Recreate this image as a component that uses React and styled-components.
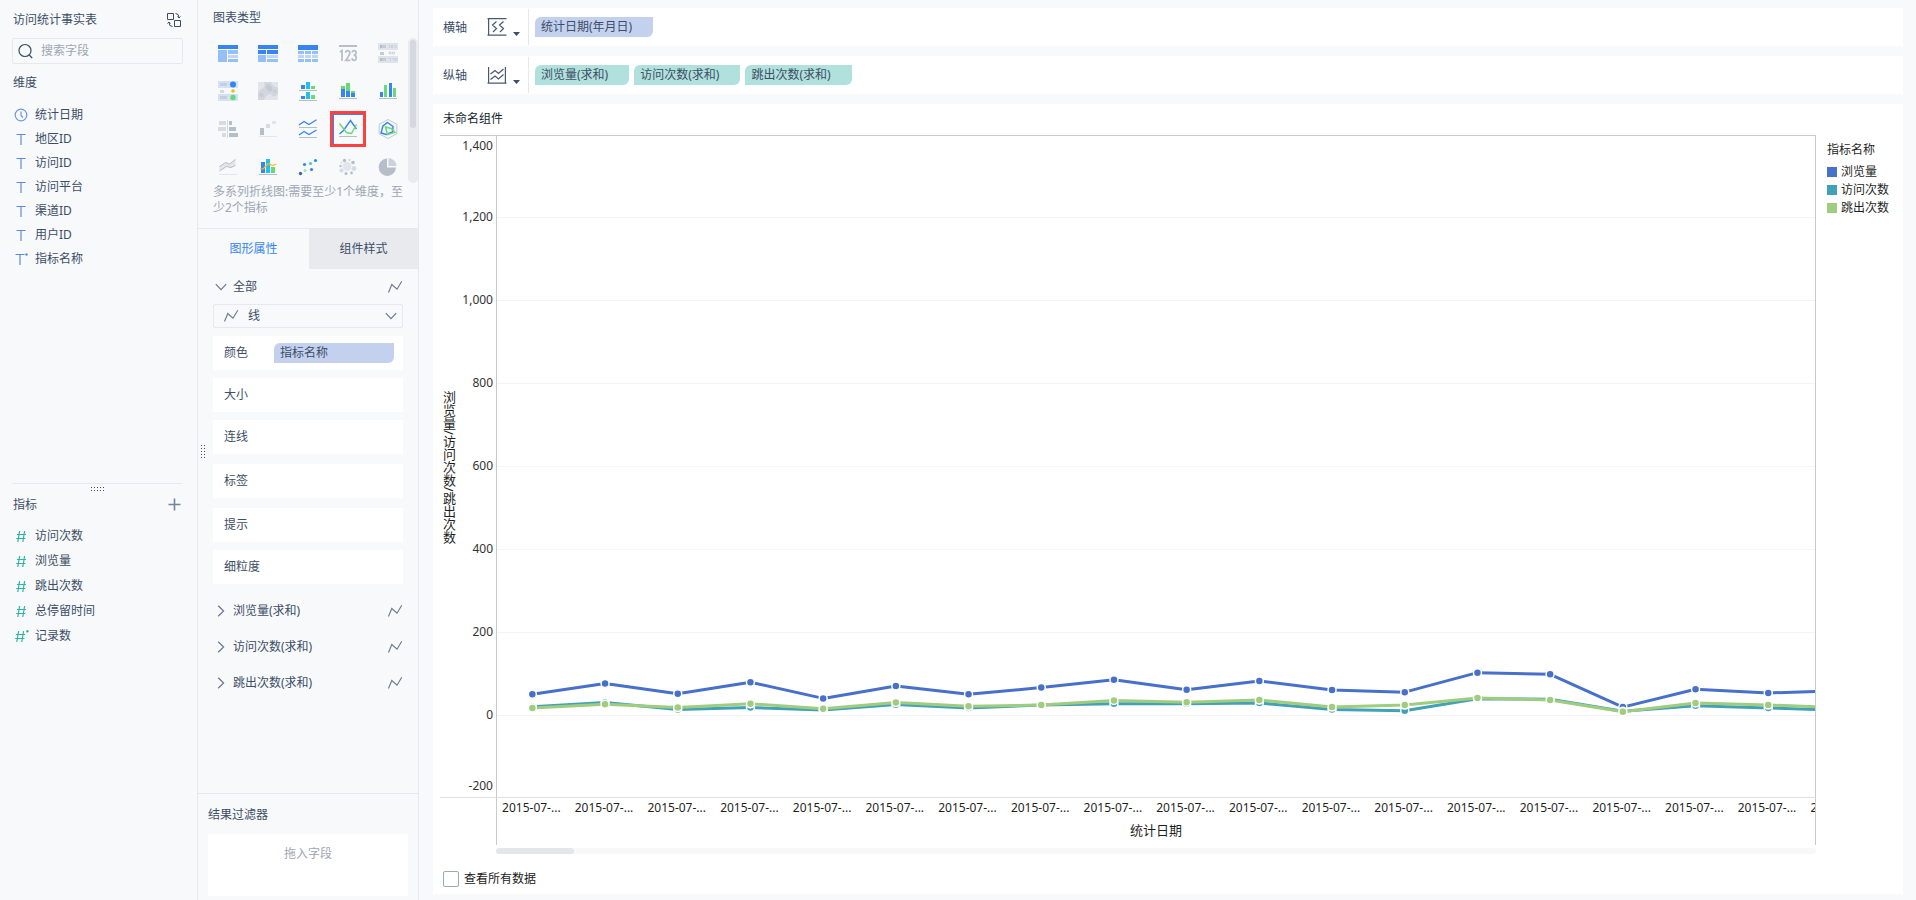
import React, { useState } from 'react'
import styled, { createGlobalStyle } from 'styled-components'

const GlobalStyle = createGlobalStyle`
    * {
        box-sizing: border-box;
    }

    body {
        margin: 0;
        background: #f7f9fb;
        color: #3d4d66;
        font-family: "Noto Sans", "Noto Sans CJK SC", sans-serif;
        font-size: 12px;
        line-height: 16px;
    }

    button, input, select {
        font: inherit;
        color: inherit;
    }

    button {
        padding: 0;
        border: none;
        background: none;
        cursor: pointer;
    }

    ul {
        margin: 0;
        padding: 0;
        list-style: none;
    }

    svg {
        display: block;
        flex: none;
    }
`;

const Page = styled.div`
    display: flex;
    min-height: 100vh;
`;

/* ---------- field list ---------- */

const FieldPanel = styled.aside`
    display: flex;
    flex-direction: column;
    flex: none;
    width: 198px;
    border-right: 1px solid #e6e8ec;
`;

const Dimensions = styled.section`
    flex: 1;
    padding: 0 14px 0 12px;
`;

const Measures = styled.section`
    flex: none;
    height: 417px;
    margin: 0 15px 0 12px;
    border-top: 1px solid #e6e8ec;
`;

const Heading = styled.h2`
    display: flex;
    align-items: center;
    justify-content: space-between;
    height: ${(p) => p.$height || 36}px;
    margin: 0;
    padding: 1px 1px 0;
    font-size: 12px;
    font-weight: 400;
`;

const Search = styled.label`
    display: flex;
    align-items: center;
    gap: 7px;
    height: 26px;
    padding-left: 5px;
    border: 1px solid #e6e8ec;
    border-radius: 2px;

    input {
        flex: 1;
        min-width: 0;
        padding: 0;
        border: none;
        outline: none;
        background: none;
    }

    input::placeholder {
        color: #9ea6b4;
        opacity: 1;
    }
`;

const FieldList = styled.ul`
    padding-top: ${(p) => p.$top}px;

    li {
        display: flex;
        align-items: center;
        gap: 6px;
        height: ${(p) => p.$row}px;
        padding-left: 1px;
    }
`;

const GripRow = styled.div`
    display: flex;
    justify-content: center;
    align-items: center;
    height: 11px;
    padding: 1px 0 0 2px;
`;

/* ---------- settings ---------- */

const SettingsPanel = styled.section`
    position: relative;
    display: flex;
    flex-direction: column;
    flex: none;
    width: 221px;
    border-right: 1px solid #e6e8ec;
`;

const SideGrip = styled.div`
    position: absolute;
    left: 3px;
    top: 50%;
    transform: translateY(-5px);
`;

const PanelTitle = styled.h2`
    margin: 0;
    padding: 10px 15px 8px;
    font-size: 12px;
    font-weight: 400;
`;

const TypeArea = styled.div`
    display: flex;
    justify-content: space-between;
    height: 149px;
    padding-left: 10px;
`;

const TypeGrid = styled.div`
    display: grid;
    grid-template-columns: repeat(5, 40px);
    grid-auto-rows: 38px;
    place-items: center;
    overflow: hidden;
`;

const TypeButton = styled.button`
    display: flex;
    align-items: center;
    justify-content: center;
    width: 36px;
    height: 36px;
    border: 3px solid ${(p) => (p.$active ? '#ff4040' : 'transparent')};
    box-shadow: ${(p) => (p.$active ? 'inset 1px 1px 0 #3685f2' : 'none')};
`;

const ScrollTrack = styled.div`
    width: 10px;
    margin-top: 4px;
    padding: 2px;
    border-radius: 5px;
    background: #e9ebee;

    div {
        height: 88px;
        border-radius: 3px;
        background: #d5d8de;
    }
`;

const Hint = styled.p`
    margin: 0;
    padding: 1px 14px 12px 15px;
    color: #9ea6b4;
`;

const Tabs = styled.div`
    display: grid;
    grid-template-columns: 111px 1fr;
    border-top: 1px solid #e6e8ec;
`;

const Tab = styled.button`
    height: 40px;
    background: ${(p) => (p.$active ? 'transparent' : '#e8eaed')};
    color: ${(p) => (p.$active ? '#3685f2' : '#3d4d66')};
`;

const Properties = styled.div`
    flex: 1;
    padding: 0 15px;
`;

const Fold = styled.button`
    display: flex;
    align-items: center;
    width: 100%;
    height: ${(p) => p.$height}px;
    padding: 0 0 0 2px;
    gap: 6px;
    text-align: left;

    span {
        flex: 1;
    }
`;

const Picker = styled.label`
    display: flex;
    align-items: center;
    height: 24px;
    padding: 0 5px 0 9px;
    border: 1px solid #e6e8ec;
    border-radius: 2px;

    select {
        flex: 1;
        height: 22px;
        margin-left: 9px;
        padding: 0;
        border: none;
        outline: none;
        background: none;
        appearance: none;
    }
`;

const Slot = styled.div`
    display: flex;
    align-items: center;
    height: 34px;
    margin-top: ${(p) => p.$gap}px;
    padding: 0 9px 0 11px;
    background: #fff;

    > span {
        width: 50px;
    }
`;

const Folds = styled.div`
    padding-top: 9px;
`;

const Filters = styled.div`
    flex: none;
    height: 107px;
    padding: 0 10px 4px 9px;
    border-top: 1px solid #e6e8ec;
`;

const DropZone = styled.div`
    height: 62px;
    margin-left: 1px;
    padding-top: 12px;
    background: #fff;
    color: #9ea6b4;
    text-align: center;
`;

const Chip = styled.button`
    flex: ${(p) => (p.$fill ? 1 : 'none')};
    height: 20px;
    padding: 0 21px 0 6px;
    border-radius: 6px 0 6px 0;
    background: ${(p) => (p.$measure ? '#b0e1dc' : '#c3d1ef')};
    text-align: left;
`;

/* ---------- canvas ---------- */

const Main = styled.main`
    display: flex;
    flex-direction: column;
    flex: 1;
    min-width: 0;
    gap: 10px;
    padding: 8px 13px 6px 14px;
`;

const Shelf = styled.div`
    display: flex;
    align-items: center;
    height: 38px;
    padding-left: 10px;
    background: #fff;

    > span {
        padding-top: 1px;
    }
`;

const ShelfType = styled.button`
    display: flex;
    align-items: flex-end;
    gap: 6px;
    width: 42px;
    height: 36px;
    margin-left: 20px;
    padding-bottom: 9px;
    border-right: 1px solid #e6e8ec;
`;

const Chips = styled.div`
    display: flex;
    gap: 5px;
    padding-left: 6px;
`;

const ChartCard = styled.section`
    flex: 1;
    padding-left: 7px;
    background: #fff;
    color: #1f1f1f;
`;

const ChartTitle = styled.h1`
    height: 31px;
    margin: 0;
    padding: 7px 3px;
    font-size: 12px;
    font-weight: 400;
    color: #141e2e;
`;

const ChartGrid = styled.div`
    display: grid;
    grid-template-columns: 56px minmax(0, 1fr) 87px;
`;

const YAxis = styled.div`
    display: flex;
    align-items: center;
    border-top: 1px solid #c9cacc;
    border-bottom: 1px solid #dfe0e2;
`;

const YTitle = styled.div`
    width: 17px;
    padding-top: 1px;
    font-size: 13px;
    line-height: 16px;
    writing-mode: vertical-rl;
`;

const Plot = styled.div`
    overflow: hidden;
    border: 1px solid #c9cacc;
    border-bottom-color: #dfe0e2;
`;

const XAxis = styled.div`
    grid-column: 2;
    height: 47px;
    overflow: hidden;
    border: solid #c9cacc;
    border-width: 0 1px;
`;

const XLabels = styled.div`
    display: flex;
    margin-left: -2px;

    span {
        flex: none;
        width: ${(p) => p.$band}px;
        padding-top: 2px;
        text-align: center;
    }
`;

const XTitle = styled.div`
    padding-top: 6px;
    font-size: 13px;
    text-align: center;
`;

const HScroll = styled.div`
    grid-column: 2;
    height: 6px;
    margin-top: 3px;
    border-radius: 3px;
    background: #f8f8f9;

    div {
        width: 78px;
        height: 6px;
        border-radius: 3px;
        background: #e5e6ea;
    }
`;

const Legend = styled.div`
    padding: 7px 0 0 11px;

    ul {
        padding-top: 5px;
    }

    li {
        display: flex;
        align-items: center;
        gap: 4px;
        height: 18px;
    }
`;

const Swatch = styled.i`
    width: 10px;
    height: 10px;
    background: ${(p) => p.$color};
`;

const ShowAll = styled.label`
    display: inline-flex;
    align-items: center;
    gap: 5px;
    padding: 17px 0 7px 3px;
    color: #1a1a1a;

    input {
        width: 16px;
        height: 16px;
        margin: 0;
        border: 1px solid #9ea8b6;
        border-radius: 2px;
        background: #fff;
        appearance: none;
    }

    input:checked {
        background: #3685f2;
    }
`;

/* ---------- icons ---------- */

const FieldIcon = ({ type }) => {
    if (type === 'date') {
        return (
            <svg width="16" height="16" viewBox="0 0 16 16" fill="none" stroke="#6f97e3" strokeWidth="1.2">
                <circle cx="8" cy="8" r="5.8" />
                <path d="M8 4.5V8.5L10 10.5" />
            </svg>
        )
    }
    if (type === 'text' || type === 'name') {
        return (
            <svg width="16" height="16" viewBox="0 0 16 16" fill="none">
                <g transform={type === 'name' ? 'translate(-1 0)' : undefined}>
                    <path d="M3.5 3.5H12.5" stroke="#5b87dd" />
                    <path d="M8 4V14" stroke="#8fb0ea" strokeWidth="1.8" />
                </g>
                {type === 'name' && <circle cx="13.5" cy="3.5" r="1.2" fill="#5b87dd" />}
            </svg>
        )
    }
    return (
        <svg width="16" height="16" viewBox="0 0 16 16" fill="none" stroke="#2fb5a2" strokeWidth="1.2">
            <path
                d="M6.6 3L4.8 14M11.6 3L9.8 14M4 6.5H13M3.2 10.5H12.4"
                transform={type === 'count' ? 'translate(-1 0)' : undefined}
            />
            {type === 'count' && <circle cx="14.4" cy="3.2" r="1.2" fill="#2fb5a2" stroke="none" />}
        </svg>
    )
}

const SwapIcon = () => (
    <svg width="16" height="16" viewBox="0 0 16 16" fill="none" stroke="#3d4d66">
        <path d="M1.5 1.5H7.5V7.5H1.5ZM8.5 8.5H14.5V14.5H8.5Z" />
        <path d="M9.5 1.5Q13 1.5 13 5.5M11.5 4.5L13 6L14.5 4.5" />
        <path d="M6.5 14.5Q3 14.5 3 10.5M1.5 11.5L3 10L4.5 11.5" />
    </svg>
)

const SearchIcon = () => (
    <svg width="16" height="16" viewBox="0 0 16 16" fill="none" stroke="#3d4d66" strokeWidth="1.2">
        <circle cx="7" cy="7.5" r="6" />
        <path d="M11.2 12L14.2 15" />
    </svg>
)

const PlusIcon = () => (
    <svg width="13" height="13" viewBox="0 0 13 13" stroke="#76839a" strokeWidth="1.6">
        <path d="M6.5 0.5V12.5M0.5 6.5H12.5" />
    </svg>
)

const Zigzag = () => (
    <svg width="16" height="14" viewBox="0 0 16 14" fill="none" stroke="#6b778c" strokeWidth="1.1">
        <path d="M1.5 12.5L4.8 4.5L10 9.2L14.8 1.2" />
    </svg>
)

const Chevron = ({ open }) => (
    <svg width="12" height="12" viewBox="0 0 12 12" fill="none" stroke="#6b778c" strokeWidth="1.2">
        <path d={open ? 'M0.8 3.2L6 8.6L11.2 3.2' : 'M3.2 0.8L8.6 6L3.2 11.2'} />
    </svg>
)

const Grip = ({ cols, rows }) => {
    const dots = []
    for (let r = 0; r < rows; r++) {
        for (let c = 0; c < cols; c++) {
            dots.push(<rect key={`${r}-${c}`} x={c * 3} y={r * 3} width="1" height="1" />)
        }
    }
    return (
        <svg width={cols * 3} height={rows * 3} fill="#3d4d66">
            {dots}
        </svg>
    )
}

const XShelfIcon = () => (
    <svg width="20" height="18" viewBox="0 0 20 18" fill="none" stroke="#4a5870" strokeWidth="1.2">
        <path d="M0.5 0.6H19.5M1.6 0.5V17.5M0.5 17.2H19.5" />
        <path d="M9.5 3.5L5.5 7L9.5 10.5L6 14M16.5 3.5L12.5 7L16.5 10.5L13 14" />
    </svg>
)

const YShelfIcon = () => (
    <svg width="20" height="18" viewBox="0 0 20 18" fill="none" stroke="#4a5870" strokeWidth="1.2">
        <path d="M1.6 1V17.5M18.4 1V17.5M0.5 17.2H19.5" />
        <path d="M3.5 8L8 4.5L11.5 7.5L16.5 3M3.5 13.5L8 10L11.5 13L16.5 8.5" />
    </svg>
)

const Caret = () => (
    <svg width="7" height="4" viewBox="0 0 7 4" fill="#3d4d66">
        <path d="M0 0H7L3.5 4Z" />
    </svg>
)

const B = '#3685f2'
const L = '#94bff7'
const P = '#bed5f9'
const G = '#b5bec9'
const F = '#d5dbe3'
const C = '#25c0ea'
const N = '#67d975'

const Bars = ({ items }) =>
    items.map(([x, y, w, h, fill], i) => <rect key={i} x={x} y={y} width={w} height={h} fill={fill} />)

// every chart type drawn on a 20x20 board
const typeIcons = [
    ['分组表', <Bars items={[[0, 2, 20, 4, B], [0, 7, 9, 12, L], [10, 7, 10, 4, L], [10, 12, 10, 3, P], [10, 16, 10, 3, L]]} />],
    ['交叉表', <Bars items={[[0, 2, 20, 4, B], [0, 7, 8, 4, B], [9, 7, 11, 4, B], [0, 12, 8, 7, L], [9, 12, 11, 3, P], [9, 16, 11, 3, L]]} />],
    ['明细表', <Bars items={[[0, 2, 20, 5, B], [0, 8, 6, 3, L], [7, 8, 6, 3, L], [14, 8, 6, 3, L], [0, 12, 6, 3, P], [7, 12, 6, 3, P], [14, 12, 6, 3, P], [0, 16, 6, 3, L], [7, 16, 6, 3, L], [14, 16, 6, 3, L]]} />],
    ['指标卡', <>
        <rect x="1" y="2" width="18" height="2" fill={G} />
        <g fill="none" stroke={G} strokeWidth="1.7" shapeRendering="auto">
            <path d="M2 9.2L4 7.6V18" />
            <path d="M7.7 9.8Q7.7 7.6 9.7 7.6T11.8 9.8Q11.8 12 7.8 17.3H12.4" />
            <path d="M14.2 9.5Q14.4 7.6 16.2 7.6T18 9.8Q18 12.2 15.6 12.2Q18.2 12.2 18.2 14.8T16.2 17.3Q14.2 17.3 14 15.2" />
        </g>
    </>],
    ['文本卡', <>
        <Bars items={[[0, 0, 20, 7, '#dfe4ec'], [0, 13, 20, 7, '#dfe4ec'], [2, 2, 2, 3, G], [4, 2, 4, 3, '#c5ccd6'], [2, 9, 4, 3, '#c5ccd6'], [2, 15, 2, 3, G], [4, 15, 4, 3, '#c5ccd6']]} />
        <path d="M11.5 2V5M13 2.5H15V3.5H13V4.5H15M16.5 2.5H18V4.5H16.5M11 9H13V11.5M11 9V10.5H13M14.5 9H16.5V11H14.5ZM10.5 15.5H12.5V18M14 15.5H16V18M17.5 15.5H19V17.5H17.5Z" fill="none" stroke="#c5ccd6" strokeWidth="0.8" shapeRendering="auto" />
    </>],
    ['颜色表', <>
        <Bars items={[[0, 0, 20, 7, '#d3e1fa'], [0, 13, 20, 7, '#d3e1fa'], [2, 2, 7, 3, '#c8cdd6'], [2, 9, 4, 3, '#d5d8de'], [2, 15, 7, 3, '#c8cdd6']]} />
        <g shapeRendering="auto">
            <circle cx="15" cy="3.5" r="3" fill={B} />
            <circle cx="15" cy="10" r="1.8" fill="#fcb913" />
            <circle cx="15" cy="16.5" r="2.7" fill={N} />
        </g>
    </>],
    ['热力图', <g shapeRendering="auto">
        <rect y="1" width="20" height="18" fill="#d2d6de" />
        <path d="M0 1H6Q8 6 4 8Q1 9 0 12ZM13 1H20V6Q15 7 13 1ZM6 19Q8 13 13 13Q15 18 20 13V19Z" fill="#e1e4ea" />
        <ellipse cx="11" cy="7" rx="2.6" ry="4" fill="#c5cad3" transform="rotate(-40 11 7)" />
        <circle cx="3.5" cy="14" r="2" fill="#c5cad3" />
        <circle cx="17" cy="10" r="1.6" fill="#c5cad3" />
    </g>],
    ['分区柱形图', <Bars items={[[3, 4, 4, 4, B], [8, 1, 4, 7, C], [13, 5, 4, 3, N], [1, 9, 18, 1, G], [3, 15, 4, 3, B], [8, 11, 4, 7, C], [13, 14, 4, 4, N], [1, 19, 18, 1, G]]} />],
    ['堆积柱形图', <Bars items={[[3, 5, 4, 3, N], [3, 8, 4, 8, B], [8, 2, 4, 8, N], [8, 10, 4, 6, B], [13, 10, 4, 2, N], [13, 12, 4, 4, B], [1, 17, 18, 1, G]]} />],
    ['多系列柱形图', <Bars items={[[2, 11, 3, 5, B], [6, 4, 3, 12, N], [11, 2, 3, 14, B], [15, 7, 3, 9, N], [1, 17, 18, 1, G]]} />],
    ['对比柱状图', <Bars items={[[1, 2, 7, 4, F], [0, 8, 8, 4, F], [4, 14, 4, 4, F], [9, 1, 1, 18, F], [11, 2, 3, 4, G], [11, 8, 7, 4, G], [11, 14, 9, 4, G]]} />],
    ['瀑布图', <Bars items={[[2, 9, 4, 7, G], [8, 5, 4, 4, F], [14, 2, 4, 3, '#e1e5ed'], [1, 17, 18, 1, '#e1e5ed']]} />],
    ['分区折线图', <>
        <Bars items={[[1, 8, 18, 1, G], [1, 18, 18, 1, G]]} />
        <path d="M1 6L6 2.5L11 5.5L18.5 0.8M1 16L6 12.5L11 15.5L18.5 11" fill="none" stroke={B} strokeWidth="1.3" shapeRendering="auto" />
    </>],
    ['多系列折线图', <>
        <rect x="1" y="17" width="18" height="1" fill={G} />
        <g fill="none" strokeWidth="1.4" shapeRendering="auto">
            <path d="M1.5 15L5.5 11.5L12.5 1.5L18.5 10" stroke={B} />
            <path d="M1.5 4.5L8.5 13.5L13.5 14.5L18.5 5.5" stroke={N} />
        </g>
    </>],
    ['雷达图', <g fill="none" shapeRendering="auto">
        <path d="M10 0.5L18.8 5.2V14.8L10 19.5L1.2 14.8V5.2Z" stroke="#c2c9d3" />
        <path d="M10 3.5L16 6.8V13.2L10 16.5L4 13.2V6.8Z" stroke="#dfe3ea" />
        <path d="M9.5 3.5L15 7.5L14.5 13L8 15.5L3 14L5 7Z" stroke={B} strokeWidth="1.4" />
        <path d="M7.5 8L13 9.5L17 13.5L9.5 15.5L8.5 12Z" stroke={N} strokeWidth="1.4" />
    </g>],
    ['面积图', <>
        <path d="M1.5 9.5L7.5 5.5L11.5 7L17.5 2.5V8.5L13 10.5L8.5 9.5L1.5 14Z" fill="#e1e5ed" shapeRendering="auto" />
        <path d="M1.5 9.5L7.5 5.5L11.5 7L17.5 2.5M1.5 14L8.5 9.5L13 10.5L17.5 8.5" fill="none" stroke={G} shapeRendering="auto" />
        <rect x="1" y="17" width="18" height="1" fill="#e1e5ed" />
    </>],
    ['组合图', <>
        <Bars items={[[3, 5, 4, 11, B], [8, 2, 4, 14, C], [13, 10, 4, 6, N], [1, 17, 18, 1, G]]} />
        <path d="M2 12H5L10.5 6.5L14.5 8.5L18.5 7" fill="none" stroke="#f9bd22" strokeWidth="1.2" shapeRendering="auto" />
    </>],
    ['散点图', <g shapeRendering="auto">
        <circle cx="2.5" cy="16.5" r="1.7" fill="#3464c0" />
        <circle cx="7" cy="13.5" r="1.5" fill="#9be3c9" />
        <circle cx="6.5" cy="7.5" r="1.6" fill={B} />
        <circle cx="12.5" cy="6.5" r="1.6" fill="#58c4c4" />
        <circle cx="13.5" cy="12.5" r="1.6" fill={B} />
        <circle cx="17.5" cy="3.5" r="1.6" fill="#2393e0" />
    </g>],
    ['聚合气泡图', <g shapeRendering="auto">
        <circle cx="9" cy="9.5" r="4.5" fill="#e1e5ed" />
        <circle cx="6.5" cy="3.5" r="1.7" fill={G} />
        <circle cx="11.5" cy="3" r="1.2" fill={F} />
        <circle cx="15" cy="5.5" r="1.8" fill={G} />
        <circle cx="16" cy="11.5" r="2.4" fill={F} />
        <circle cx="13.5" cy="16" r="1.4" fill={G} />
        <circle cx="8" cy="16.5" r="1.5" fill={G} />
        <circle cx="3.5" cy="13.5" r="2" fill={F} />
        <circle cx="2.5" cy="9" r="1.2" fill={G} />
        <circle cx="3.5" cy="5.5" r="1" fill={F} />
    </g>],
    ['饼图', <g shapeRendering="auto">
        <path d="M9 1.5A8.7 8.7 0 1 0 18 10.5H9Z" fill={G} />
        <path d="M10.5 1A8.6 8.6 0 0 1 18.6 9H10.5Z" fill="#ccd2db" />
    </g>],
]

/* ---------- data ---------- */

const dimensions = [
    ['date', '统计日期'],
    ['text', '地区ID'],
    ['text', '访问ID'],
    ['text', '访问平台'],
    ['text', '渠道ID'],
    ['text', '用户ID'],
    ['name', '指标名称'],
]

const measures = [
    ['number', '访问次数'],
    ['number', '浏览量'],
    ['number', '跳出次数'],
    ['number', '总停留时间'],
    ['count', '记录数'],
]

const slots = [
    { label: '颜色', gap: 8, field: '指标名称' },
    { label: '大小', gap: 8 },
    { label: '连线', gap: 8 },
    { label: '标签', gap: 10 },
    { label: '提示', gap: 10 },
    { label: '细粒度', gap: 8 },
]

const metrics = ['浏览量(求和)', '访问次数(求和)', '跳出次数(求和)']

const series = [
    { name: '浏览量', color: '#4770cb', values: [50, 76, 51, 79, 40, 70, 50, 66, 85, 61, 82, 60, 55, 102, 98, 19, 62, 53, 59] },
    { name: '访问次数', color: '#41a2b7', values: [20, 30, 13, 18, 12, 25, 17, 24, 27, 27, 29, 13, 10, 39, 38, 9, 22, 17, 11] },
    { name: '跳出次数', color: '#a0cc7f', values: [17, 26, 18, 27, 15, 30, 21, 24, 35, 31, 36, 19, 24, 41, 36, 8, 29, 24, 18] },
]

const ticks = [1400, 1200, 1000, 800, 600, 400, 200, 0, -200]

const BAND = 72.7;
const PLOT_HEIGHT = 661;
const ZERO_Y = 579;
const STEP = 83;

const xOf = (i) => BAND * (i + 0.5) - 1
const yOf = (value) => ZERO_Y - (value / 200) * STEP

const tickY = (value) => {
    // the end labels stay inside the axis
    if (value === 1400) return 14;
    if (value === -200) return 654;
    return yOf(value) + 4;
}

const LineChart = () => (
    <svg width={BAND * 19} height={PLOT_HEIGHT} role="img" aria-label="多系列折线图">
        {ticks.slice(1, -1).map((t) => (
            <rect key={t} x="0" y={yOf(t)} width="100%" height="1" fill="#f4f4f5" />
        ))}
        {series.map((s) => (
            <g key={s.name}>
                <polyline
                    points={s.values.map((v, i) => `${xOf(i)},${yOf(v)}`).join(' ')}
                    fill="none"
                    stroke={s.color}
                    strokeWidth="3"
                    strokeLinejoin="round"
                />
                {s.values.map((v, i) => (
                    <circle key={i} cx={xOf(i)} cy={yOf(v)} r="4" fill={s.color} stroke="#fff" strokeWidth="1.5" />
                ))}
            </g>
        ))}
    </svg>
)

const App = () => {
    const [activeType, setActiveType] = useState('多系列折线图');
    const [tab, setTab] = useState('图形属性');
    const [showAll, setShowAll] = useState(false);

    return (
        <Page>
            <GlobalStyle />

            <FieldPanel>
                <Dimensions>
                    <Heading $height={38}>
                        访问统计事实表
                        <button aria-label="切换数据"><SwapIcon /></button>
                    </Heading>
                    <Search>
                        <SearchIcon />
                        <input type="text" placeholder="搜索字段" aria-label="搜索字段" />
                    </Search>
                    <Heading>维度</Heading>
                    <FieldList $top={3} $row={24}>
                        {dimensions.map(([type, name]) => (
                            <li key={name}><FieldIcon type={type} />{name}</li>
                        ))}
                    </FieldList>
                </Dimensions>
                <Measures>
                    <GripRow><Grip cols={5} rows={2} /></GripRow>
                    <Heading $height={18}>
                        指标
                        <button aria-label="添加指标"><PlusIcon /></button>
                    </Heading>
                    <FieldList $top={10} $row={25}>
                        {measures.map(([type, name]) => (
                            <li key={name}><FieldIcon type={type} />{name}</li>
                        ))}
                    </FieldList>
                </Measures>
            </FieldPanel>

            <SettingsPanel>
                <SideGrip><Grip cols={2} rows={5} /></SideGrip>
                <PanelTitle>图表类型</PanelTitle>
                <TypeArea>
                    <TypeGrid>
                        {typeIcons.map(([name, drawing]) => (
                            <TypeButton
                                key={name}
                                aria-label={name}
                                $active={name === activeType}
                                onClick={() => setActiveType(name)}
                            >
                                <svg width="20" height="20" viewBox="0 0 20 20" shapeRendering="crispEdges">
                                    {drawing}
                                </svg>
                            </TypeButton>
                        ))}
                    </TypeGrid>
                    <ScrollTrack><div /></ScrollTrack>
                </TypeArea>
                <Hint>多系列折线图:需要至少1个维度，至少2个指标</Hint>

                <Tabs>
                    {['图形属性', '组件样式'].map((name) => (
                        <Tab key={name} $active={name === tab} onClick={() => setTab(name)}>{name}</Tab>
                    ))}
                </Tabs>

                <Properties>
                    <Fold $height={35}>
                        <Chevron open />
                        <span>全部</span>
                        <Zigzag />
                    </Fold>
                    <Picker>
                        <Zigzag />
                        <select aria-label="图形">
                            <option>线</option>
                        </select>
                        <Chevron open />
                    </Picker>
                    {slots.map((s) => (
                        <Slot key={s.label} $gap={s.gap}>
                            <span>{s.label}</span>
                            {s.field && <Chip $fill>{s.field}</Chip>}
                        </Slot>
                    ))}
                    <Folds>
                        {metrics.map((name) => (
                            <Fold key={name} $height={36}>
                                <Chevron />
                                <span>{name}</span>
                                <Zigzag />
                            </Fold>
                        ))}
                    </Folds>
                </Properties>

                <Filters>
                    <Heading as="h3" $height={40}>结果过滤器</Heading>
                    <DropZone>拖入字段</DropZone>
                </Filters>
            </SettingsPanel>

            <Main>
                <Shelf>
                    <span>横轴</span>
                    <ShelfType aria-label="横轴设置"><XShelfIcon /><Caret /></ShelfType>
                    <Chips><Chip>统计日期(年月日)</Chip></Chips>
                </Shelf>
                <Shelf>
                    <span>纵轴</span>
                    <ShelfType aria-label="纵轴设置"><YShelfIcon /><Caret /></ShelfType>
                    <Chips>
                        {metrics.map((name) => <Chip key={name} $measure>{name}</Chip>)}
                    </Chips>
                </Shelf>

                <ChartCard>
                    <ChartTitle>未命名组件</ChartTitle>
                    <ChartGrid>
                        <YAxis>
                            <YTitle>浏览量/访问次数/跳出次数</YTitle>
                            <svg width="39" height={PLOT_HEIGHT} fill="#333" fontSize="12" textAnchor="end">
                                {ticks.map((t) => (
                                    <text key={t} x="36" y={tickY(t)}>{t.toLocaleString('en-US')}</text>
                                ))}
                            </svg>
                        </YAxis>
                        <Plot><LineChart /></Plot>
                        <Legend>
                            指标名称
                            <ul>
                                {series.map((s) => (
                                    <li key={s.name}><Swatch $color={s.color} />{s.name}</li>
                                ))}
                            </ul>
                        </Legend>
                        <XAxis>
                            <XLabels $band={BAND}>
                                {series[0].values.map((v, i) => <span key={i}>2015-07-...</span>)}
                            </XLabels>
                            <XTitle>统计日期</XTitle>
                        </XAxis>
                        <HScroll><div /></HScroll>
                    </ChartGrid>
                    <ShowAll>
                        <input type="checkbox" checked={showAll} onChange={(e) => setShowAll(e.target.checked)} />
                        查看所有数据
                    </ShowAll>
                </ChartCard>
            </Main>
        </Page>
    );
}

export default App
